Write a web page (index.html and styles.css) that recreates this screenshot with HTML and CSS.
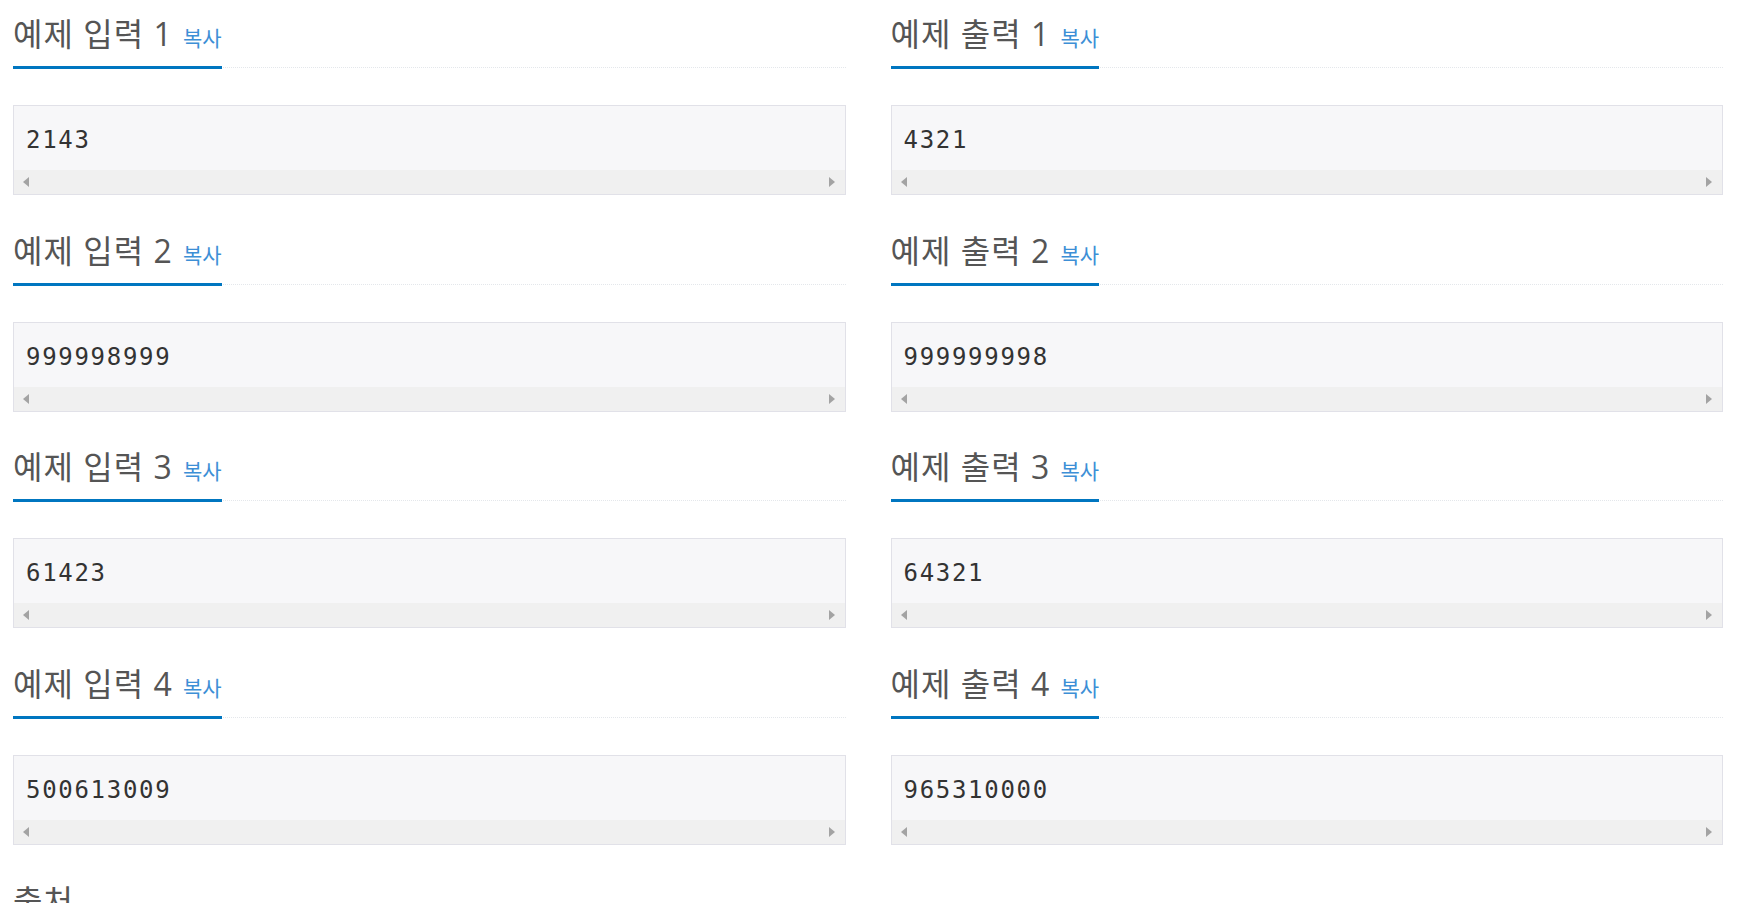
FILE: index.html
```html
<!DOCTYPE html>
<html lang="ko">
<head>
<meta charset="utf-8">
<title>예제</title>
<link rel="stylesheet" href="styles.css">
</head>
<body>
<div class="page">
  <div class="samples">
    <section class="sample">
      <div class="headline"><h2>예제 입력 1 <span class="copy">복사</span></h2></div>
      <div class="pre"><pre>2143</pre><div class="scroll"><span class="arr left"></span><span class="arr right"></span></div></div>
    </section>
    <section class="sample">
      <div class="headline"><h2>예제 출력 1 <span class="copy">복사</span></h2></div>
      <div class="pre"><pre>4321</pre><div class="scroll"><span class="arr left"></span><span class="arr right"></span></div></div>
    </section>
    <section class="sample">
      <div class="headline"><h2>예제 입력 2 <span class="copy">복사</span></h2></div>
      <div class="pre"><pre>999998999</pre><div class="scroll"><span class="arr left"></span><span class="arr right"></span></div></div>
    </section>
    <section class="sample">
      <div class="headline"><h2>예제 출력 2 <span class="copy">복사</span></h2></div>
      <div class="pre"><pre>999999998</pre><div class="scroll"><span class="arr left"></span><span class="arr right"></span></div></div>
    </section>
    <section class="sample">
      <div class="headline"><h2>예제 입력 3 <span class="copy">복사</span></h2></div>
      <div class="pre"><pre>61423</pre><div class="scroll"><span class="arr left"></span><span class="arr right"></span></div></div>
    </section>
    <section class="sample">
      <div class="headline"><h2>예제 출력 3 <span class="copy">복사</span></h2></div>
      <div class="pre"><pre>64321</pre><div class="scroll"><span class="arr left"></span><span class="arr right"></span></div></div>
    </section>
    <section class="sample">
      <div class="headline"><h2>예제 입력 4 <span class="copy">복사</span></h2></div>
      <div class="pre"><pre>500613009</pre><div class="scroll"><span class="arr left"></span><span class="arr right"></span></div></div>
    </section>
    <section class="sample">
      <div class="headline"><h2>예제 출력 4 <span class="copy">복사</span></h2></div>
      <div class="pre"><pre>965310000</pre><div class="scroll"><span class="arr left"></span><span class="arr right"></span></div></div>
    </section>
  </div>
  <section class="source">
    <div class="headline"><h2>출처</h2></div>
  </section>
</div>
</body>
</html>
```
FILE: styles.css
```css
html, body {
  margin: 0;
  padding: 0;
  background: #fff;
}

.page {
  padding: 0 36px 0 13px;
  font-family: "Open Sans", "Noto Sans CJK KR", sans-serif;
}

.samples {
  display: grid;
  grid-template-columns: 1fr 1fr;
  column-gap: 45px;
  row-gap: 21.67px;
}

.sample {
  height: 195px;
}

.headline {
  padding-top: 17px;
  border-bottom: 1px dotted #e4e7eb;
  margin-bottom: 37px;
}

.headline h2 {
  display: inline-block;
  margin: 0 0 -2px 0;
  padding-bottom: 16px;
  border-bottom: 3px solid #0076c0;
  font-size: 32px;
  font-weight: 400;
  line-height: 33px;
  letter-spacing: 1px;
  color: #555;
}

.copy {
  font-size: 21px;
  line-height: 1;
  letter-spacing: 0;
  color: #3d8fd6;
  margin-left: 1px;
}

.pre {
  border: 1px solid #e1e1e8;
  background: #f7f7f9;
}

.pre pre {
  margin: 0;
  padding: 19px 12px 15px;
  font-family: "DejaVu Sans Mono", monospace;
  font-size: 24px;
  line-height: 30px;
  letter-spacing: 1.7px;
  color: #333;
}

.scroll {
  height: 24px;
  background: #f0f0f0;
  display: flex;
  align-items: center;
  justify-content: space-between;
  padding: 0 10px 0 9px;
}

.arr {
  width: 0;
  height: 0;
  border-top: 5.5px solid transparent;
  border-bottom: 5.5px solid transparent;
}

.arr.left {
  border-right: 6px solid #a3a3a3;
}

.arr.right {
  border-left: 6px solid #a3a3a3;
}

.source {
  margin-top: 21.67px;
}
```
